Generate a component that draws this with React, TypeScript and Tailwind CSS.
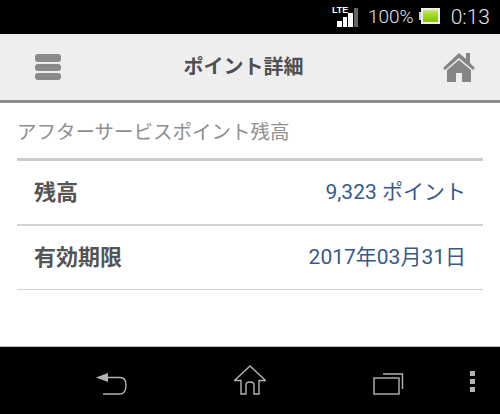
const font = "font-['Roboto','Noto_Sans_CJK_JP',sans-serif]";

function StatusBar() {
  return (
    <div className="flex h-[34px] items-center justify-end bg-black pr-[10px] text-[#e4e4e4]">
      {/* 電波 */}
      <div className="relative mr-[10px] h-[28px] w-[28px]">
        <svg width="28" height="28" viewBox="0 0 28 28">
          <rect x="7" y="18" width="5" height="6" fill="#fff" />
          <rect x="13" y="14" width="4" height="10" fill="#fff" />
          <rect x="18" y="10" width="5" height="14" fill="#fff" />
          <rect x="24" y="5" width="4" height="19" fill="#666" />
        </svg>
        <span className="absolute left-[2px] top-[2px] text-[9px] leading-[11px] font-bold text-white font-['Liberation_Sans',sans-serif]">
          LTE
        </span>
      </div>
      <span className="mr-[5px] text-[19px] font-light leading-[34px]">100%</span>
      {/* バッテリー */}
      <svg width="21" height="16" viewBox="0 0 21 16" className="mr-[11px] -mt-[2px]">
        <defs>
          <linearGradient id="batt" x1="0" y1="0" x2="0" y2="1">
            <stop offset="0" stopColor="#c9e88a" />
            <stop offset="0.4" stopColor="#a4dc1e" />
            <stop offset="1" stopColor="#7fc400" />
          </linearGradient>
        </defs>
        <rect x="0" y="4" width="2" height="8" fill="#ccc" />
        <rect x="2" y="0" width="19" height="16" fill="#eee" />
        <rect x="4" y="2" width="15" height="12" fill="url(#batt)" />
      </svg>
      <span className="text-[21px] font-light leading-[34px]">0:13</span>
    </div>
  );
}

function Header() {
  return (
    <div className="flex h-[69px] items-center justify-between border-b-[3px] border-[#8c8c8c] bg-[#eeeeee] pl-[35px] pr-[25px]">
      <div className="flex w-[26px] flex-col gap-[2px]">
        <span className="h-[8px] rounded-[3px] bg-[#8a8a8a]" />
        <span className="h-[7px] rounded-[3px] bg-[#8a8a8a]" />
        <span className="h-[7px] rounded-[3px] bg-[#8a8a8a]" />
      </div>
      <h1 className="mr-[17px] text-[20px] font-bold text-[#4f4f4f]">ポイント詳細</h1>
      <svg width="32" height="31" viewBox="0 0 32 31">
        <path d="M16 1 L23 7 V1 H27 V11 L32 16 L30 18 L16 6 L2 18 L0 16 Z" fill="#858585" />
        <path d="M16 8 L28 18 V30 H19 V21 H13 V30 H4 V18 Z" fill="#858585" />
      </svg>
    </div>
  );
}

function Row({ label, value, className }: { label: string; value: string; className: string }) {
  return (
    <div className={`flex items-center justify-between border-[#d2d2d2] pl-[17px] pr-[17px] ${className}`}>
      <span className="text-[22px] font-bold text-[#555555]">{label}</span>
      <span className="text-[21px] text-[#365a8c]">{value}</span>
    </div>
  );
}

function NavBar() {
  return (
    <div className="flex h-[68px] items-center border-t border-[#bbbbbb] bg-black pl-[96px]">
      <svg width="31" height="22" viewBox="0 0 31 22" fill="none" stroke="#b4b4b4" strokeWidth="1.4" className="mt-[7px]">
        <path d="M0 4.5 L12 0 V9 Z" fill="#b4b4b4" stroke="none" />
        <path d="M12 4.5 H24 Q30 4.5 30 12 Q30 21 24 21 H7" />
      </svg>
      <svg width="32" height="30" viewBox="0 0 32 30" fill="none" stroke="#b4b4b4" strokeWidth="1.4" className="ml-[107px] -mt-[1px]">
        <path d="M16 1 L0.5 15.5 H7 V29 H12 V20 Q12 17 16 17 Q20 17 20 20 V29 H25 V15.5 H31.5 Z" />
      </svg>
      <svg width="31" height="22" viewBox="0 0 31 22" fill="none" stroke="#b4b4b4" strokeWidth="1.4" className="ml-[107px] mt-[7px]">
        <rect x="1" y="5" width="25" height="16" />
        <path d="M10 1 H29.5 V16" />
      </svg>
      <div className="ml-[66px] flex flex-col gap-[3px] mt-[2px]">
        <span className="size-[5px] bg-[#b4b4b4]" />
        <span className="size-[5px] bg-[#b4b4b4]" />
        <span className="size-[5px] bg-[#b4b4b4]" />
      </div>
    </div>
  );
}

export default function App() {
  return (
    <div className={`flex h-[414px] w-[500px] flex-col overflow-hidden bg-white ${font}`}>
      <StatusBar />
      <Header />
      <div className="flex-1 px-[17px]">
        <p className="flex h-[58px] items-center border-b-[3px] border-[#cccccc] pt-[4px] text-[19.5px] text-[#8f8f8f]">
          アフターサービスポイント残高
        </p>
        <Row label="残高" value="9,323 ポイント" className="h-[65px] border-b-2" />
        <Row label="有効期限" value="2017年03月31日" className="h-[64px] border-b" />
      </div>
      <NavBar />
    </div>
  );
}
